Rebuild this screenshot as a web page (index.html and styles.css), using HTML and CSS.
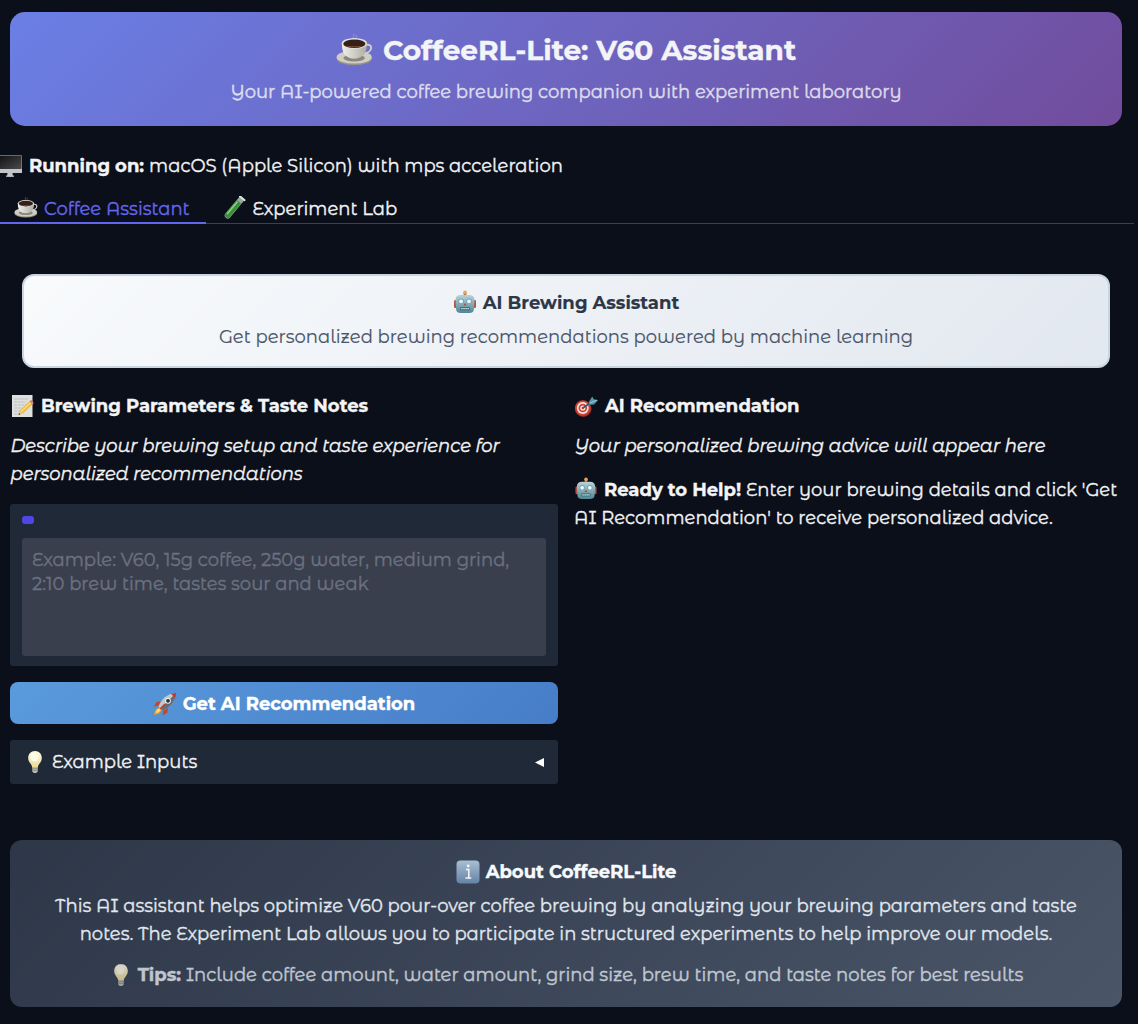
FILE: index.html
```
<!DOCTYPE html>
<html lang="en">
<head>
<meta charset="utf-8">
<title>CoffeeRL-Lite: V60 Assistant</title>
<link rel="stylesheet" href="styles.css">
</head>
<body>
<svg class="defs" width="0" height="0" aria-hidden="true">
  <defs>
    <linearGradient id="g-face" x1="0" y1="0" x2="0" y2="1"><stop offset="0" stop-color="#b9d2da"/><stop offset="1" stop-color="#4f8795"/></linearGradient>
    <linearGradient id="g-bulb" x1="0" y1="0" x2="0" y2="1"><stop offset="0" stop-color="#fffbe0"/><stop offset="1" stop-color="#e9d998"/></linearGradient>
    <linearGradient id="g-info" x1="0" y1="0" x2="0" y2="1"><stop offset="0" stop-color="#a9bfd5"/><stop offset="1" stop-color="#6483a5"/></linearGradient>
    <linearGradient id="g-cup" x1="0" y1="0" x2="1" y2="0"><stop offset="0" stop-color="#f0efeb"/><stop offset="1" stop-color="#aeaba2"/></linearGradient>
    <linearGradient id="g-screen" x1="0" y1="0" x2="1" y2="1"><stop offset="0" stop-color="#111"/><stop offset="1" stop-color="#4b4b4e"/></linearGradient>
    <symbol id="i-cup" viewBox="0 0 24 24">
      <path d="M11 5c-1-1.500 1.500-2 .5-4M13 4.500c-.6-1 .8-1.500.4-2.500" fill="none" stroke="#b9bcc8" stroke-width=".8" opacity=".4"/>
      <ellipse cx="11.800" cy="17.300" rx="11.400" ry="4.300" fill="#96938a"/>
      <ellipse cx="11.800" cy="16.300" rx="11.400" ry="4.200" fill="#cfcdc4"/>
      <ellipse cx="11.800" cy="16.900" rx="7" ry="2.200" fill="#8b877d"/>
      <path d="M19 8.500c5.500-1.500 5 5-1 5.500" fill="none" stroke="#d0cec7" stroke-width="1.200"/>
      <path d="M3.800 7.500c0 5 1.500 9.800 8 9.800s8.300-4.800 8.300-9.800z" fill="url(#g-cup)"/>
      <ellipse cx="11.900" cy="7.400" rx="8.200" ry="3.500" fill="#e4e2dc"/>
      <ellipse cx="11.900" cy="7.600" rx="7.200" ry="2.800" fill="#35201a"/>
      <path d="M6.300 8.900c3 1.400 8 1.400 11 0-3 .4-8 .4-11 0z" fill="#7c5138"/>
    </symbol>
    <symbol id="i-monitor" viewBox="0 0 24 24">
      <path d="M9.500 18h5l.3 4.500H9.200z" fill="#c3c4c7"/><rect x="8" y="21.500" width="8" height="1.300" rx=".5" fill="#cfd0d2"/>
      <rect x="0" y="1.500" width="24" height="17.500" rx=".6" fill="#c3c4c7"/><rect x=".4" y="2" width="23.200" height="13" fill="url(#g-screen)"/>
    </symbol>
    <symbol id="i-tube" viewBox="0 0 24 24">
      <g transform="rotate(40 12 12)"><path d="M9 -.5h6v22.300a3 3 0 0 1-6 0z" fill="#b9cfc0" opacity=".8"/><path d="M9.400 4h5.200v17.700a2.600 2.600 0 0 1-5.200 0z" fill="#37913a"/><path d="M10.600 5v16" stroke="#91d47c" stroke-width="1.300"/><rect x="8" y="-1.800" width="8" height="2" rx=".9" fill="#dae5e2"/></g>
    </symbol>
    <symbol id="i-robot" viewBox="0 0 24 24">
      <path d="M12 3v3" stroke="#85614c" stroke-width="2.600"/><circle cx="12" cy="2.500" r="1.900" fill="#e7a657"/>
      <rect x="1" y="10" width="3" height="8" rx="1.200" fill="#b55248"/><rect x="20" y="10" width="3" height="8" rx="1.200" fill="#b55248"/>
      <path d="M2.500 10Q2.500 5 8 5h8q5.500 0 5.500 5L21 18.500q0 4.500-5 4.500H8q-5 0-5-4.500z" fill="url(#g-face)"/>
      <circle cx="8" cy="11.300" r="2.900" fill="#7aa6b2"/><circle cx="16" cy="11.300" r="2.900" fill="#7aa6b2"/><circle cx="8" cy="11.300" r="1.900" fill="#eaffff"/><circle cx="16" cy="11.300" r="1.900" fill="#eaffff"/>
      <path d="M12 13l1.500 2.600h-3z" fill="#b8483f"/><rect x="7" y="17" width="10" height="3.400" rx="1.200" fill="#45707b"/><path d="M8.200 18.700h7.600" stroke="#dcebed" stroke-width="1.300" stroke-dasharray="1.400 .7"/>
    </symbol>
    <symbol id="i-memo" viewBox="0 0 24 24">
      <rect x="2" y="1" width="20.500" height="22" fill="#dedfdf"/><path d="M4 5h14M4 8h12M4 11h13M4 14h8M4 17h7M4 20h5" stroke="#b4b5b7" stroke-width=".8" stroke-dasharray="3 .7"/>
      <path d="M8.500 21l1.400-4.800L20 6.800l3 3.300-9.900 9.300z" fill="#eebd3e"/><path d="M11 17.600L21 8.500" stroke="#ffe18a" stroke-width="1.200"/><path d="M19.600 7.300l1.500-1.500 2.700 3.200-1.400 1.700z" fill="#da7b76"/><path d="M8.500 21l1.400-4.800 3.200 3.200z" fill="#e5c49a"/><path d="M8.500 21l.6-1.900 1.200 1.200z" fill="#333"/>
    </symbol>
    <symbol id="i-target" viewBox="0 0 24 24">
      <ellipse cx="9.300" cy="14.900" rx="8.300" ry="8" fill="#8e2c27"/><circle cx="8.800" cy="14" r="7.800" fill="#cf4034"/><circle cx="8.800" cy="14" r="5.900" fill="#f0e9e4"/><circle cx="8.800" cy="14" r="4.300" fill="#cf4034"/><circle cx="8.800" cy="14" r="2.600" fill="#f0e9e4"/><circle cx="8.800" cy="14" r="1.200" fill="#cf4034"/>
      <path d="M9 14l10-7" stroke="#315c68" stroke-width="1.600"/><path d="M14.800 8l3.400-5.500 1.600 2.800L24 6.300l-4 4.200-4.500.2z" fill="#5597a8"/><path d="M16 9l7-3" stroke="#a4d8df" stroke-width=".8"/>
    </symbol>
    <symbol id="i-rocket" viewBox="0 0 24 24">
      <path d="M6.500 15.500C3 16 1.800 18.500 1 23c4.500-1 7-2 7.500-5.500z" fill="#f0a02e"/><path d="M6.500 16.500C4.500 17 3.500 18.500 3 21c2.500-.5 4-1.500 4.500-3.500z" fill="#ffe66b"/>
      <path d="M9.500 9L3.500 10 .8 14.500l5.700-.7zM15 14.500l-.5 6L9.800 23.500l.4-6z" fill="#c24836"/>
      <path d="M5.500 14.500C8 7.500 14 1.500 23 1c-.5 9-6.500 15-13.500 17.500z" fill="#c3c8ce"/><path d="M9.500 18.500C16.500 16 22.500 10 23 1L7.500 16.500z" fill="#666c75"/>
      <path d="M18 1.800C19.800 1.200 21.500 1 23 1c0 1.700-.3 3.500-.8 5.200z" fill="#b93e32"/><circle cx="15" cy="8.800" r="2.900" fill="#eceff0"/><circle cx="15" cy="8.800" r="1.900" fill="#1f3040"/><path d="M7 17l5-5" stroke="#b64235" stroke-width="1.500"/>
    </symbol>
    <symbol id="i-bulb" viewBox="0 0 24 24">
      <path d="M12 1C7.800 1 5.200 4.200 5.200 8c0 4.600 3.800 6 4 9.500h5.600C15 14 18.800 12.600 18.800 8c0-3.800-2.600-7-6.800-7z" fill="url(#g-bulb)"/><ellipse cx="11.500" cy="7" rx="4" ry="4.500" fill="#fffef1" opacity=".8"/>
      <path d="M9.300 17h5.400v4.300L13.400 23h-2.800l-1.300-1.700z" fill="#b9b8ad"/><path d="M9.300 18.700h5.400M9.300 20.500h5.400" stroke="#85857f" stroke-width=".7"/>
    </symbol>
    <symbol id="i-info" viewBox="0 0 24 24">
      <rect x=".5" y=".5" width="23" height="23" rx="4" fill="url(#g-info)"/><path d="M10 9.500h2.800V18M9.500 18h5.800" fill="none" stroke="#f4f8fb" stroke-width="1.500"/><circle cx="12.200" cy="6" r="1.400" fill="#f4f8fb"/>
    </symbol>
  </defs>
</svg>
<div class="app">
  <header class="hero">
    <h1 class="hero-title"><svg class="emoji emoji-lg"><use href="#i-cup"/></svg><span>CoffeeRL-Lite: V60 Assistant</span></h1>
    <p class="hero-sub">Your AI-powered coffee brewing companion with experiment laboratory</p>
  </header>
  <p class="platform"><svg class="emoji"><use href="#i-monitor"/></svg><strong>Running on:</strong><span>macOS (Apple Silicon) with mps acceleration</span></p>
  <nav class="tabs">
    <a class="tab active"><svg class="emoji"><use href="#i-cup"/></svg><span>Coffee Assistant</span></a>
    <a class="tab"><svg class="emoji"><use href="#i-tube"/></svg><span>Experiment Lab</span></a>
  </nav>
  <section class="intro">
    <h2 class="intro-title"><svg class="emoji"><use href="#i-robot"/></svg><span>AI Brewing Assistant</span></h2>
    <p>Get personalized brewing recommendations powered by machine learning</p>
  </section>
  <main class="columns">
    <div class="column">
      <h3><svg class="emoji"><use href="#i-memo"/></svg><span>Brewing Parameters &amp; Taste Notes</span></h3>
      <p class="hint"><em>Describe your brewing setup and taste experience for personalized recommendations</em></p>
      <div class="field">
        <span class="field-label"></span>
        <textarea class="field-input" placeholder="Example: V60, 15g coffee, 250g water, medium grind, 2:10 brew time, tastes sour and weak"></textarea>
      </div>
      <button class="submit"><svg class="emoji"><use href="#i-rocket"/></svg><span>Get AI Recommendation</span></button>
      <div class="accordion"><svg class="emoji"><use href="#i-bulb"/></svg><span>Example Inputs</span><svg class="caret" viewBox="0 0 9 9"><path d="M0 4.500L9 0v9z"/></svg></div>
    </div>
    <div class="column">
      <h3><svg class="emoji"><use href="#i-target"/></svg><span>AI Recommendation</span></h3>
      <p class="hint"><em>Your personalized brewing advice will appear here</em></p>
      <p class="advice"><svg class="emoji"><use href="#i-robot"/></svg><strong>Ready to Help!</strong> Enter your brewing details and click 'Get AI Recommendation' to receive personalized advice.</p>
    </div>
  </main>
  <footer class="about">
    <h3><svg class="emoji"><use href="#i-info"/></svg><span>About CoffeeRL-Lite</span></h3>
    <p class="about-text">This AI assistant helps optimize V60 pour-over coffee brewing by analyzing your brewing parameters and taste notes. The Experiment Lab allows you to participate in structured experiments to help improve our models.</p>
    <p class="tips"><svg class="emoji"><use href="#i-bulb"/></svg><strong>Tips:</strong><span>Include coffee amount, water amount, grind size, brew time, and taste notes for best results</span></p>
  </footer>
</div>
</body>
</html>
```
FILE: styles.css
```
* { box-sizing: border-box; }
body {
  margin: 0;
  background: #0b0f19;
  color: #f3f4f6;
  font: 18px/28px "Montserrat Alternates", Montserrat, Inter, sans-serif;
  -webkit-text-stroke: .35px;
}
h1, h2, h3, p { margin: 0; font-size: inherit; }
h1, h2, h3, strong { font-family: Montserrat, "Montserrat Alternates", Inter, sans-serif; font-weight: 700; }
em { letter-spacing: -.05px; }
.defs { position: absolute; }
.app { width: 1134px; }
.emoji { width: 24px; height: 24px; flex: none; }
.emoji-lg { width: 37px; height: 37px; }
.hero {
  margin: 12px 12px 0 10px;
  padding: 20px;
  height: 114px;
  border-radius: 15px;
  background: linear-gradient(135deg, #6a7fe5 0%, #714c9c 100%);
  text-align: center;
}
.hero-title { display: flex; justify-content: center; gap: 10px; height: 36px; margin-bottom: 10px; font-size: 28px; line-height: 36px; }
.hero-sub { opacity: .85; }
.platform { display: flex; align-items: center; gap: 5px; margin: 26px 0 0 -2px; }
.platform .emoji { margin-right: 2px; }
.tabs { display: flex; margin-top: 14px; height: 30px; box-shadow: inset 0 -1px #374151; }
.tab { display: flex; gap: 6px; padding: 1px 16px 0 14px; height: 30px; }
.tab + .tab { gap: 7px; padding-left: 16px; }
.tab .emoji { margin-top: 1px; }
.tab.active { color: #6366f1; border-bottom: 2px solid #6366f1; }
.intro {
  margin: 50px 24px 0 22px;
  height: 94px;
  padding: 13px 12px;
  border: 2px solid #cbd5e0;
  border-radius: 12px;
  background: linear-gradient(135deg, #f8fafc, #e2e8f0);
  color: #4a5568;
  text-align: center;
  -webkit-text-stroke: .15px;
}
.intro-title { display: flex; justify-content: center; gap: 6px; margin-bottom: 6px; color: #2d3748; }
.intro .emoji { margin-top: 1px; }
.columns { display: grid; grid-template-columns: 548px 548px; gap: 16px; margin: 24px 0 0 10px; }
.column h3 { display: flex; gap: 7px; }
.column .emoji { margin-top: 2px; }
.hint { margin: 12px 0 16px; padding-left: .5px; }
.advice .emoji { margin: 0 6px -4px 0; vertical-align: baseline; height: 23px; }
.field { height: 162px; padding: 12px; border-radius: 3px; background: #1f2937; }
.field-label { display: block; width: 12px; height: 8px; border-radius: 3px; background: #4f46e5; }
.field-input {
  display: block; width: 100%; height: 118px; margin-top: 14px; padding: 10px;
  border: 0; border-radius: 3px; resize: none; background: #3a3f4e;
  font: inherit; line-height: 24px; overflow: hidden;
}
.field-input::placeholder { color: #6b7280; }
.submit {
  display: flex; justify-content: center; gap: 6px; align-items: center;
  width: 100%; height: 42px; margin: 16px 0; padding: 2px 0 0; border: 0; border-radius: 8px;
  background: linear-gradient(135deg, #5a9bdc, #477dc8); color: #fff;
  font: 700 18px/28px Montserrat, "Montserrat Alternates", Inter, sans-serif;
}
.column .submit .emoji { margin-top: 0; }
.accordion { display: flex; align-items: center; gap: 5px; height: 44px; padding: 0 14px 0 13px; border-radius: 3px; background: #1f2937; }
.column .accordion .emoji { margin-top: 0; }
.caret { width: 9px; height: 9px; margin-left: auto; fill: #fff; }
.about {
  margin: 56px 12px 0 10px; height: 167px; padding: 18px 20px 0;
  border-radius: 12px; background: linear-gradient(135deg, #2d3748, #4a5568);
  color: #e2e8f0; text-align: center;
}
.about h3, .tips { display: flex; justify-content: center; align-items: center; gap: 5px; }
.about h3 { gap: 6px; color: #f7fafc; }
.about-text { margin: 6px 0 13px; }
.tips { opacity: .8; }
```
